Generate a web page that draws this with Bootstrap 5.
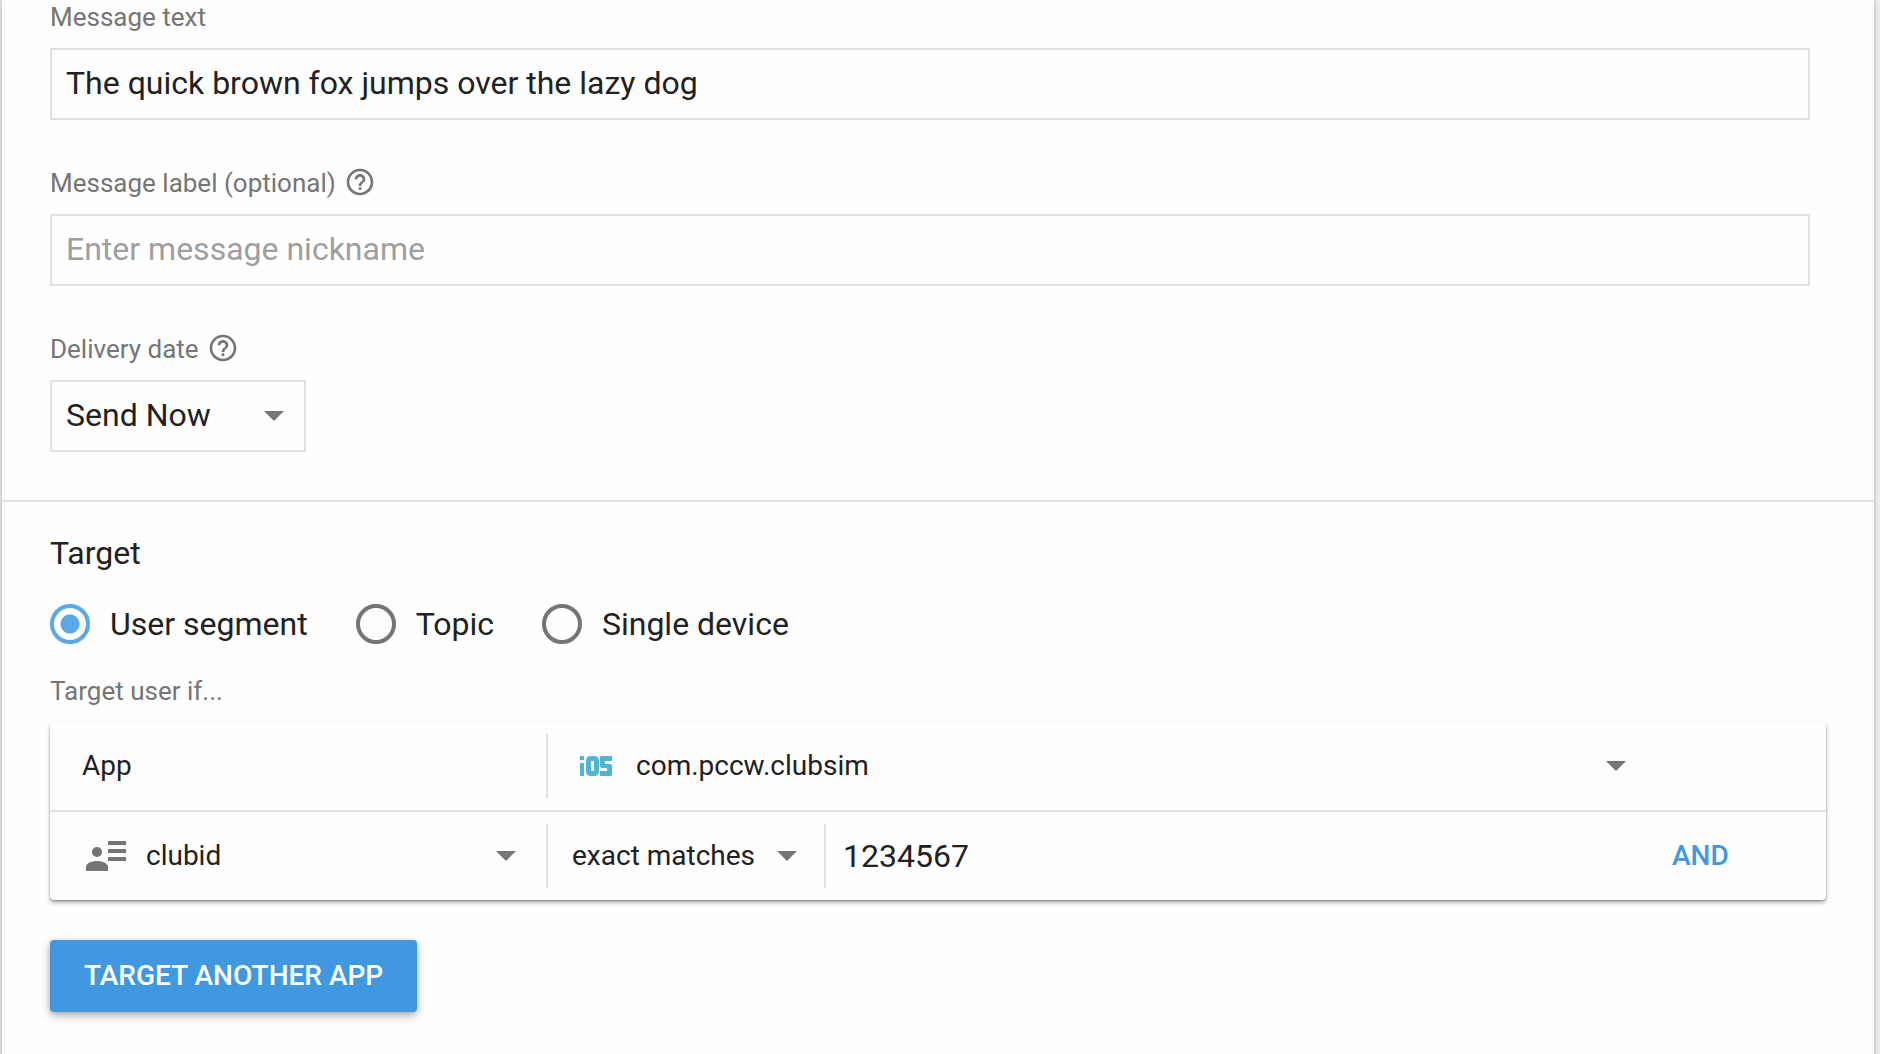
<!DOCTYPE html>
<html lang="en">
<head>
<meta charset="utf-8">
<meta name="viewport" content="width=device-width, initial-scale=1">
<title>Compose message</title>
<link href="https://cdn.jsdelivr.net/npm/bootstrap@5.3.0/dist/css/bootstrap.min.css" rel="stylesheet">
<style>
  :root {
    --ink: #212121;
    --muted-ink: #757575;
    --line: #e0e0e0;
    --accent: #4099e0;
    --paper: #fefefe;
    --caret: url("data:image/svg+xml,%3Csvg xmlns='http://www.w3.org/2000/svg' viewBox='0 0 20 10'%3E%3Cpath d='M0 0h20L10 10z' fill='%23757575'/%3E%3C/svg%3E");
  }
  body {
    font-family: Roboto, "Liberation Sans", sans-serif;
    font-size: 28px;
    color: var(--ink);
    background: #ececed;
  }
  .composer {
    margin-left: 2px;
    margin-right: 6px;
    background: var(--paper);
    box-shadow: 0 0 4px rgba(0, 0, 0, .3);
  }
  .section-pad { padding-left: 48px; padding-right: 48px; }
  .message-part { padding-bottom: 48px; border-bottom: 2px solid var(--line); }
  .message-part .field { margin-right: 16px; }
  .field + .field { margin-top: 46px; }
  .field-label {
    display: flex;
    align-items: center;
    gap: 8px;
    margin: 0 0 14px;
    font-size: 26px;
    line-height: 34px;
    color: var(--muted-ink);
  }
  .help-icon { width: 32px; height: 32px; margin-bottom: 2px; fill: currentColor; }
  .box-input, .box-select {
    height: 72px;
    padding: 0 14px 2px;
    border: 2px solid var(--line);
    border-radius: 0;
    font-size: 32px;
    line-height: 40px;
    color: var(--ink);
    background-color: var(--paper);
  }
  .box-input::placeholder { color: #9e9e9e; }
  .box-select {
    width: 256px;
    background-image: var(--caret);
    background-size: 20px 10px;
    background-position: right 20px center;
  }
  .target-part { padding-top: 30px; padding-bottom: 48px; }
  .target-title { margin: 0 0 30px; font-size: 32px; line-height: 42px; font-weight: 400; }
  .choices { gap: 48px; margin-bottom: 30px; }
  .choice { display: flex; align-items: center; gap: 20px; font-size: 32px; line-height: 40px; }
  .choice .form-check-input {
    width: 40px;
    height: 40px;
    margin: 0;
    border: 4px solid var(--muted-ink);
    background-color: var(--paper);
  }
  .choice .form-check-input:checked {
    border-color: #5aa8e6;
    background-image: radial-gradient(circle, #5aa8e6 9px, transparent 10px);
    background-size: auto;
  }
  .rules {
    border-radius: 4px;
    background: var(--paper);
    box-shadow: 0 3px 4px rgba(0, 0, 0, .26), 0 1px 2px rgba(0, 0, 0, .3);
  }
  .rule-row { padding: 12px 0; }
  .rule-row + .rule-row { border-top: 2px solid var(--line); }
  .rule-cell { display: flex; align-items: center; height: 64px; }
  .rule-cell + .rule-cell { border-left: 2px solid var(--line); }
  .name-cell { width: 496px; padding-left: 32px; }
  .attr-cell { padding-left: 36px; }
  .match-cell { width: 278px; }
  .app-cell { padding-left: 32px; }
  .plain-select {
    height: 64px;
    padding: 0 40px 0 0;
    border: 0;
    border-radius: 0;
    font-size: 28px;
    line-height: 40px;
    color: var(--ink);
    background-color: transparent;
    background-image: var(--caret);
    background-size: 20px 10px;
    background-position: right 30px center;
  }
  .app-cell .plain-select { padding-left: 24px; background-position: right 14px center; }
  .attr-cell .plain-select { padding-left: 20px; }
  .match-cell .plain-select { padding-left: 24px; background-position: right 27px center; }
  .ios-logo { width: 32px; height: 20px; fill: #4fb5d3; }
  .person-icon { width: 40px; height: 32px; fill: var(--muted-ink); }
  .value-input {
    height: 64px;
    padding: 0 17px;
    border: 0;
    border-radius: 0;
    font-size: 32px;
    line-height: 40px;
    color: var(--ink);
    background: transparent;
  }
  .row-end { width: 186px; }
  .btn-and { padding: 8px 0; margin-left: 32px; border: 0; font-size: 28px; line-height: 40px; font-weight: 500; color: var(--accent); }
  .btn-target {
    margin-top: 40px;
    padding: 16px 34px;
    border: 0;
    border-radius: 4px;
    font-size: 28px;
    line-height: 40px;
    font-weight: 500;
    color: #fff;
    background: var(--accent);
    box-shadow: 0 4px 10px rgba(0, 0, 0, .26), 0 1px 4px rgba(0, 0, 0, .16);
  }
  .btn-target:hover { color: #fff; background: #3489cd; }
</style>
</head>
<body>
<svg class="d-none" aria-hidden="true">
  <symbol id="help" viewBox="0 0 24 24">
    <path d="M11 18h2v-2h-2v2zm1-16C6.480 2 2 6.480 2 12s4.480 10 10 10 10-4.480 10-10S17.520 2 12 2zm0 18c-4.410 0-8-3.590-8-8s3.590-8 8-8 8 3.590 8 8-3.590 8-8 8zm0-14c-2.210 0-4 1.790-4 4h2c0-1.100.9-2 2-2s2 .9 2 2c0 2-3 1.750-3 5h2c0-2.250 3-2.500 3-5 0-2.210-1.790-4-4-4z"/>
  </symbol>
</svg>

<main class="composer min-vh-100">
  <form>
    <section class="message-part section-pad">
      <div class="field">
        <label class="field-label" for="messageText">Message text</label>
        <input class="form-control box-input" id="messageText" type="text" value="The quick brown fox jumps over the lazy dog">
      </div>
      <div class="field">
        <label class="field-label" for="messageLabel">Message label (optional)
          <svg class="help-icon" aria-hidden="true"><use href="#help"/></svg>
        </label>
        <input class="form-control box-input" id="messageLabel" type="text" placeholder="Enter message nickname">
      </div>
      <div class="field">
        <label class="field-label" for="deliveryDate">Delivery date
          <svg class="help-icon" aria-hidden="true"><use href="#help"/></svg>
        </label>
        <select class="form-select box-select" id="deliveryDate">
          <option>Send Now</option>
        </select>
      </div>
    </section>

    <section class="target-part section-pad">
      <h2 class="target-title">Target</h2>
      <div class="choices d-flex flex-wrap">
        <label class="choice"><input class="form-check-input" type="radio" name="target" checked>User segment</label>
        <label class="choice"><input class="form-check-input" type="radio" name="target">Topic</label>
        <label class="choice"><input class="form-check-input" type="radio" name="target">Single device</label>
      </div>

      <p class="field-label">Target user if...</p>
      <div class="rules">
        <div class="rule-row d-flex align-items-center">
          <label class="rule-cell name-cell flex-shrink-0" for="appName">App</label>
          <div class="rule-cell app-cell flex-grow-1">
            <!-- iOS platform badge -->
            <svg class="ios-logo flex-shrink-0" viewBox="0 0 32 20" aria-hidden="true">
              <rect width="4" height="4"/>
              <rect y="7" width="4" height="13"/>
              <rect x="8.500" y="2.500" width="8" height="15" rx="2" fill="none" stroke="#4fb5d3" stroke-width="5"/>
              <rect x="20" width="12" height="5" rx="2"/>
              <rect x="26" width="6" height="5"/>
              <rect x="20" y="1" width="5" height="11" rx="2"/>
              <rect x="22" y="8" width="9" height="4"/>
              <rect x="27" y="8" width="5" height="11" rx="2"/>
              <rect x="20" y="15" width="12" height="5" rx="2"/>
              <rect x="20" y="15" width="6" height="5"/>
            </svg>
            <select class="form-select plain-select" id="appName">
              <option>com.pccw.clubsim</option>
            </select>
          </div>
          <div class="row-end flex-shrink-0"></div>
        </div>
        <div class="rule-row d-flex align-items-center">
          <div class="rule-cell name-cell attr-cell flex-shrink-0">
            <svg class="person-icon flex-shrink-0" viewBox="0 0 40 32" aria-hidden="true">
              <circle cx="11" cy="12" r="5"/>
              <path d="M0 31v-4c0-4 6-6 11-6s11 2 11 6v4z"/>
              <path d="M22 1h18v4H22zM22 9h18v4H22zM22 17h18v4H22z"/>
            </svg>
            <select class="form-select plain-select" aria-label="User property">
              <option>clubid</option>
            </select>
          </div>
          <div class="rule-cell match-cell flex-shrink-0">
            <select class="form-select plain-select" aria-label="Match type">
              <option>exact matches</option>
            </select>
          </div>
          <div class="rule-cell flex-grow-1">
            <input class="form-control value-input" type="text" value="1234567" aria-label="Value">
          </div>
          <div class="row-end flex-shrink-0">
            <button class="btn btn-and" type="button">AND</button>
          </div>
        </div>
      </div>
      <button class="btn btn-target" type="button">TARGET ANOTHER APP</button>
    </section>
  </form>
</main>
<script src="https://cdn.jsdelivr.net/npm/bootstrap@5.3.0/dist/js/bootstrap.bundle.min.js"></script>
</body>
</html>
